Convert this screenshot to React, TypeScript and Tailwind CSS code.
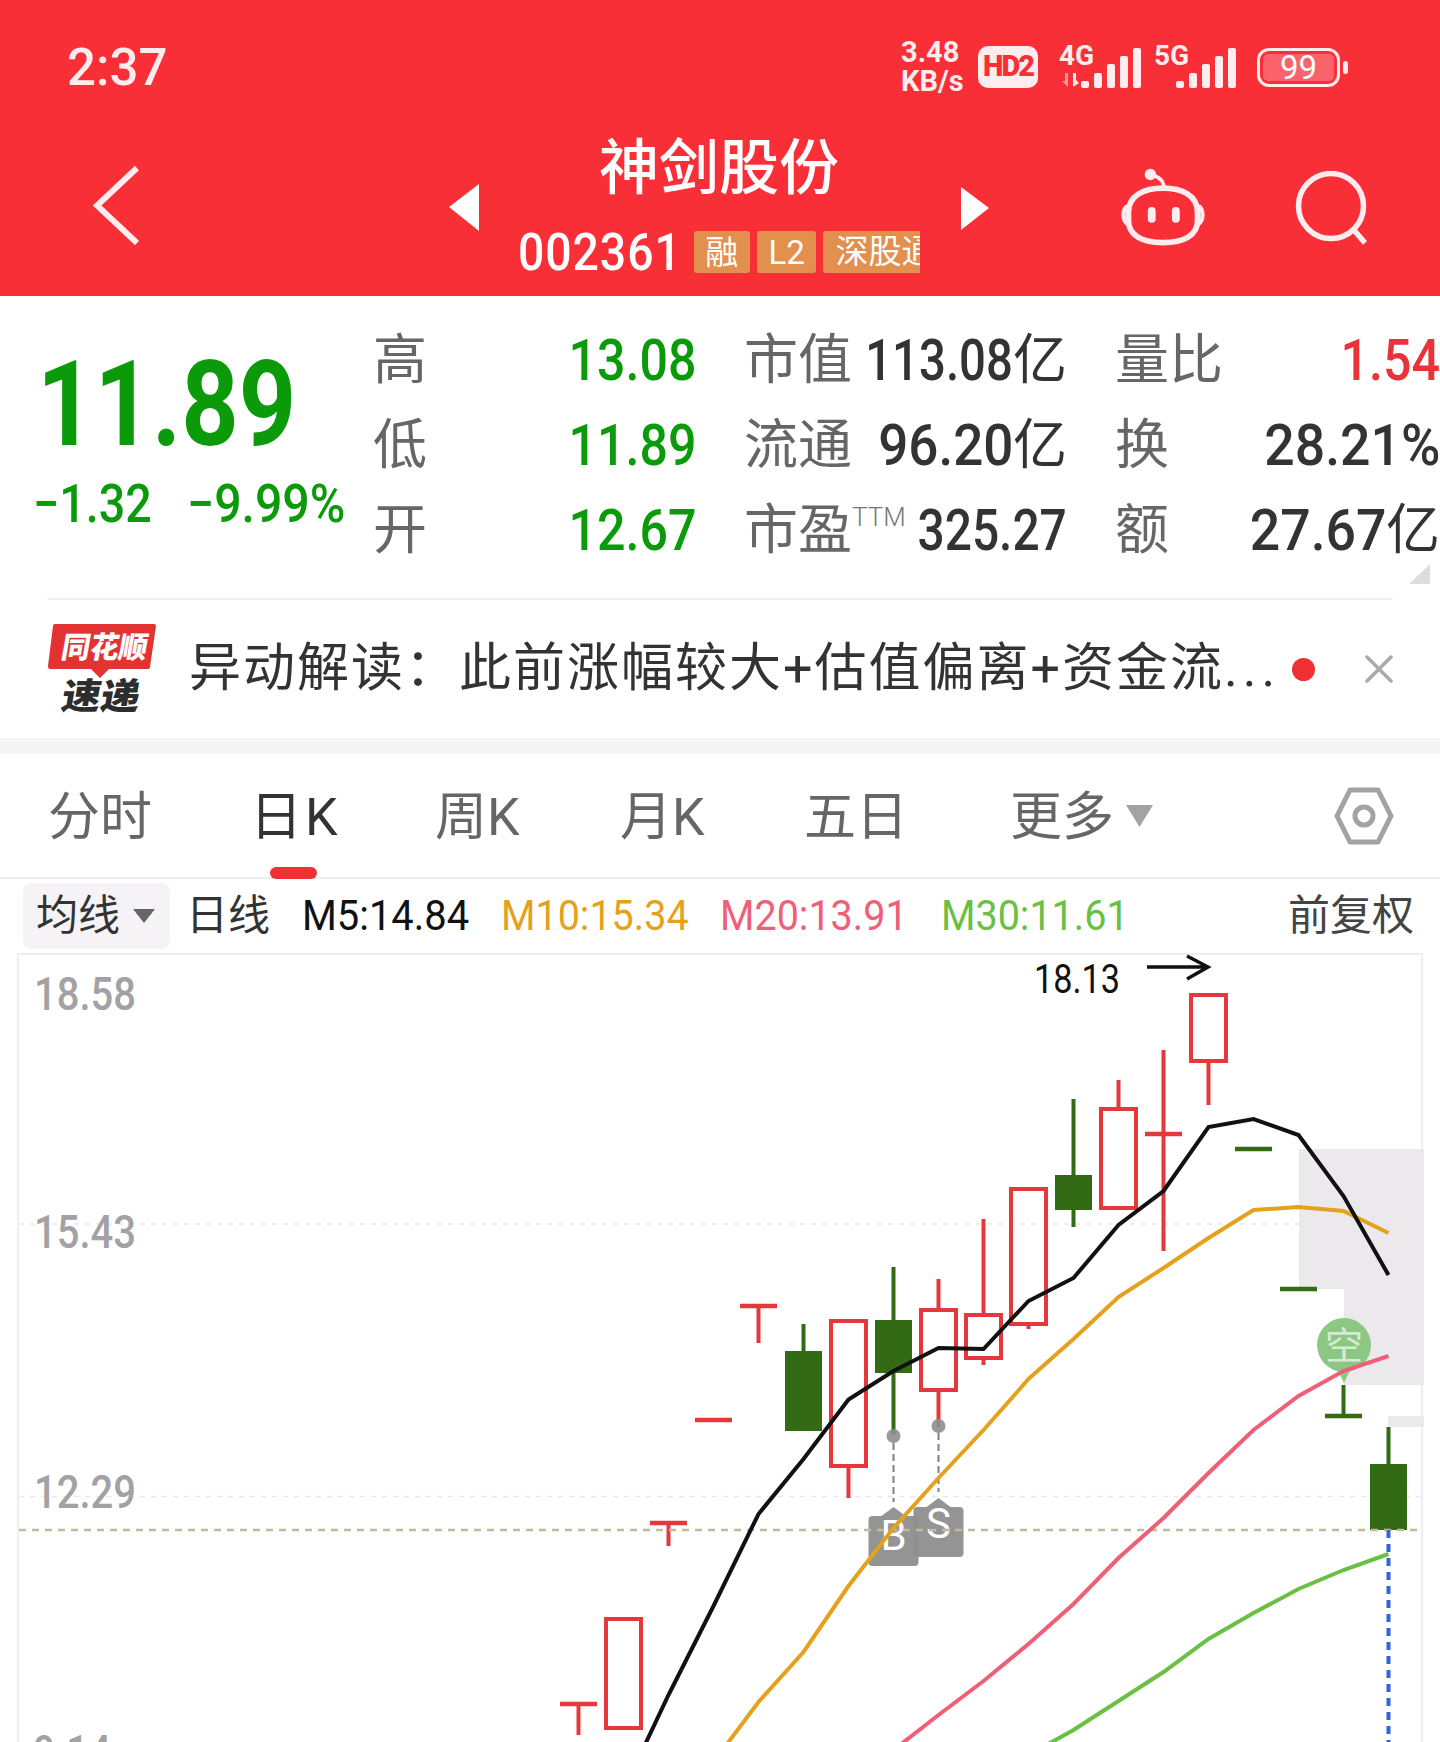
const RED = '#e5383c';
const GREEN = '#336a14';

// x of a candle, counted back from the newest one
const cx = (i: number) => 1388.5 - 45 * i;

type Candle = { i: number; top: number; bot: number; hollow?: boolean; wt?: number; wb?: number };

const candles: Candle[] = [
  { i: 0, top: 1464, bot: 1530, wt: 1427 },
  { i: 4, top: 993, bot: 1063, hollow: true, wb: 1105 },
  { i: 6, top: 1107, bot: 1210, hollow: true, wt: 1080 },
  { i: 7, top: 1175, bot: 1210, wt: 1099, wb: 1227 },
  { i: 8, top: 1187, bot: 1326, hollow: true, wb: 1329 },
  { i: 9, top: 1313, bot: 1360, hollow: true, wt: 1219, wb: 1365 },
  { i: 10, top: 1308, bot: 1392, hollow: true, wt: 1279, wb: 1427 },
  { i: 11, top: 1320, bot: 1373, wt: 1267, wb: 1435 },
  { i: 12, top: 1319, bot: 1468, hollow: true, wb: 1498 },
  { i: 13, top: 1351, bot: 1431, wt: 1324 },
  { i: 17, top: 1617, bot: 1730, hollow: true },
];

// flat days: bar plus optional stem
const flats = [
  { i: 1, y: 1416, from: 1385, to: 1416, color: GREEN },
  { i: 2, y: 1289, color: GREEN },
  { i: 3, y: 1149, color: GREEN },
  { i: 5, y: 1134, from: 1050, to: 1251, color: RED },
  { i: 14, y: 1306, from: 1305, to: 1343, color: RED },
  { i: 15, y: 1420, color: RED },
  { i: 16, y: 1523, from: 1522, to: 1546, color: RED },
  { i: 18, y: 1704, from: 1703, to: 1735, color: RED },
];

const ma5 = [1275, 1196, 1135, 1119, 1127, 1191, 1225, 1278, 1301, 1349, 1348, 1371, 1399.5, 1459, 1514, 1606, 1695, 1790];
const ma10 = [1233, 1211, 1207, 1210, 1238, 1268, 1297, 1339, 1379, 1430, 1478, 1528, 1586, 1652, 1702, 1762];
const ma20 = [1356, 1371, 1396, 1430, 1473, 1518, 1558, 1604, 1644, 1681, 1715, 1750];
const ma30 = [1554, 1570, 1589, 1613, 1639, 1672, 1701, 1730, 1755];

const toPoints = (ys: number[]) => ys.map((y, i) => `${cx(i)},${y}`).join(' ');

const Signal = ({ label, arrows }: { label: string; arrows?: boolean }) => (
  <div className="relative h-[42px] w-[84px]">
    <svg viewBox="0 0 84 42" className="absolute inset-0 h-full w-full overflow-visible" fill="#ffecee">
      <rect x="23" y="35" width="8" height="7" rx="2" />
      <rect x="36" y="27" width="8" height="15" rx="2" />
      <rect x="49" y="18" width="8" height="24" rx="2" />
      <rect x="62" y="10" width="8" height="32" rx="2" />
      <rect x="75" y="2" width="8" height="40" rx="2" />
      {arrows && (
        <g>
          <path d="M15 27h3v7l3 3-6 4z" />
          <path d="M7 27h3v14l-6-6h3z" opacity="0.55" />
        </g>
      )}
    </svg>
    <span className="absolute left-[1px] top-[-4px] text-[28px] font-bold leading-[28px] text-[#ffecee]">{label}</span>
  </div>
);

const Value = ({ children, unit, color, fit }: { children: string; unit?: string; color: string; fit: string }) => (
  <div className={`flex min-w-0 flex-1 items-center justify-end whitespace-nowrap ${color}`}>
    <span className={`inline-block origin-right text-[57px] font-medium leading-[85px] ${fit}`}>{children}</span>
    {unit && <span className="text-[54px] leading-[85px]">{unit}</span>}
  </div>
);

const Label = ({ children }: { children: string }) => (
  <span className="shrink-0 text-[54px] leading-[85px] text-[#666666]">{children}</span>
);

const Tag = ({ x, top, letter, ty }: { x: number; top: number; letter: string; ty: number }) => (
  <g>
    <path
      d={`M${x - 25} ${top + 19} a4 4 0 0 1 4 -4 h9 l12 -9 l12 9 h9 a4 4 0 0 1 4 4 v42 a4 4 0 0 1 -4 4 h-42 a4 4 0 0 1 -4 -4 z`}
      fill="#8e8e8e"
      opacity="0.95"
    />
    <text x={x} y={ty} textAnchor="middle" fontSize="42" fill="#ffffff">{letter}</text>
  </g>
);

const KChart = () => (
  <svg viewBox="0 953 1440 789" className="absolute inset-0 h-full w-full">
    <path d="M1299 1149H1424V1385H1344V1289H1299z" fill="#ece9ec" />
    <rect x="1388" y="1416" width="36" height="11" fill="#ece9ec" />
    <path d="M19 1224H1422M19 1496.5H1422" stroke="#e8e8e8" strokeWidth="1.5" strokeDasharray="5 6" />

    <text x="34" y="1010" fontSize="46" fontWeight="500" fill="#a2a2a5" textLength="102" lengthAdjust="spacingAndGlyphs">18.58</text>
    <text x="34" y="1248" fontSize="46" fontWeight="500" fill="#a2a2a5" textLength="102" lengthAdjust="spacingAndGlyphs">15.43</text>
    <text x="34" y="1508" fontSize="46" fontWeight="500" fill="#a2a2a5" textLength="102" lengthAdjust="spacingAndGlyphs">12.29</text>
    <text x="33" y="1768" fontSize="46" fontWeight="500" fill="#a2a2a5" textLength="78" lengthAdjust="spacingAndGlyphs">9.14</text>

    <text x="1034" y="993" fontSize="40" fill="#111111" textLength="86" lengthAdjust="spacingAndGlyphs">18.13</text>
    <path d="M1147 967H1208M1187 956L1208 967L1187 979" fill="none" stroke="#111111" strokeWidth="3.5" />

    {candles.map((c) => {
      const color = c.hollow ? RED : GREEN;
      const x = cx(c.i);
      return (
        <g key={c.i}>
          {c.wt && <line x1={x} x2={x} y1={c.wt} y2={c.top} stroke={color} strokeWidth="4" />}
          {c.wb && <line x1={x} x2={x} y1={c.bot} y2={c.wb} stroke={color} strokeWidth="4" />}
          {c.hollow ? (
            <rect x={x - 17.5} y={c.top + 2} width="35" height={c.bot - c.top - 4} fill="none" stroke={color} strokeWidth="4" />
          ) : (
            <rect x={x - 18.5} y={c.top} width="37" height={c.bot - c.top} fill={color} />
          )}
        </g>
      );
    })}
    {flats.map((f) => (
      <g key={f.i} stroke={f.color}>
        <line x1={cx(f.i) - 18.5} x2={cx(f.i) + 18.5} y1={f.y} y2={f.y} strokeWidth="4.5" />
        {f.from && <line x1={cx(f.i)} x2={cx(f.i)} y1={f.from} y2={f.to} strokeWidth="4" />}
      </g>
    ))}

    {/* buy / sell marks */}
    <circle cx="893.5" cy="1436" r="7" fill="#8e8e8e" opacity="0.9" />
    <circle cx="938.5" cy="1426" r="7" fill="#8e8e8e" opacity="0.9" />
    <path d="M893.5 1443V1502M938.5 1433V1492" stroke="#808080" strokeWidth="2" strokeDasharray="7 4" />
    <Tag x={893.5} top={1501} letter="B" ty={1550} />
    <Tag x={938.5} top={1492} letter="S" ty={1538} />
    <path d="M19 1530H1422" stroke="#c4b998" strokeWidth="2.5" strokeDasharray="7 6" />

    {/* short marker */}
    <circle cx="1344" cy="1345" r="27" fill="#8cc784" />
    <path d="M1336 1366L1344 1383L1352 1366z" fill="#8cc784" />
    <text x="1344" y="1359" textAnchor="middle" fontSize="38" fill="#d6ebd2">空</text>

    <path d="M1388.5 1530V1742" stroke="#2f63e0" strokeWidth="4" strokeDasharray="8 6" />

    <polyline points={toPoints(ma30)} fill="none" stroke="#69c043" strokeWidth="4" />
    <polyline points={toPoints(ma20)} fill="none" stroke="#ef5f78" strokeWidth="4" />
    <polyline points={toPoints(ma10)} fill="none" stroke="#e6a11c" strokeWidth="4" />
    <polyline points={toPoints(ma5)} fill="none" stroke="#111111" strokeWidth="4" />
  </svg>
);

export default function App() {
  return (
    <div className="h-[1742px] w-[1440px] overflow-hidden bg-white font-['Roboto','Noto_Sans_CJK_SC',sans-serif]">
      <header className="h-[296px] bg-[#f82f37] text-white">
        {/* status bar */}
        <div className="flex h-[134px] items-center text-[#ffecee]">
          <span className="ml-[67px] text-[51px] font-medium leading-none">2:37</span>
          <div className="ml-auto mr-[92px] flex items-center">
            <div className="w-[63px] text-[29px] font-bold leading-[29px]">
              <div>3.48</div>
              <div>KB/s</div>
            </div>
            <div className="ml-[14px] flex h-[42px] w-[60px] items-center justify-center rounded-[10px] bg-[#ffecee] text-[29px] font-black tracking-[-2px] text-[#f82f37]">
              HD2
            </div>
            <div className="ml-[20px]">
              <Signal label="4G" arrows />
            </div>
            <div className="ml-[11px]">
              <Signal label="5G" />
            </div>
            <div className="ml-[20px] flex h-[39px] w-[83px] items-center justify-center rounded-[12px] border-[3px] border-[#ffecee] p-[3px]">
              <div className="flex h-full w-full items-center justify-center rounded-[5px] bg-white/25 text-[33px] leading-none text-white">
                99
              </div>
            </div>
            <div className="ml-[3px] h-[13px] w-[5px] rounded-full bg-[#ffecee]" />
          </div>
        </div>

        {/* title bar */}
        <div className="flex h-[162px] items-start">
          <svg viewBox="0 0 46 80" className="ml-[93px] mt-[31px] h-[80px] w-[46px]" fill="none" stroke="#ffecee" strokeWidth="6">
            <path d="M44 3L4 40.5L44 78" />
          </svg>
          <svg viewBox="0 0 30 47" className="ml-[310px] mt-[50px] h-[47px] w-[30px]" fill="#ffffff">
            <path d="M30 0V47L0 23z" />
          </svg>
          <div className="ml-[39px] w-[402px]">
            <div className="mt-[5px] text-center text-[60px] font-medium leading-[60px]">神剑股份</div>
            <div className="mt-[32px] flex h-[42px] items-center">
              <span className="inline-block w-[154px] origin-left scale-x-[0.91] whitespace-nowrap text-[51px] font-medium leading-none tracking-[1px]">002361</span>
              <span className="ml-[22px] flex h-[42px] w-[56px] items-center justify-center rounded-[3px] bg-[#e38f4e] text-[33px] leading-none">融</span>
              <span className="ml-[7px] flex h-[42px] w-[60px] items-center justify-center rounded-[3px] bg-[#e38f4e] text-[33px] leading-none">L2</span>
              <span className="ml-[7px] h-[42px] w-[97px] overflow-hidden whitespace-nowrap rounded-l-[3px] bg-[#e38f4e] pl-[12px] text-[33px] leading-[42px]">深股通</span>
            </div>
          </div>
          <svg viewBox="0 0 28 43" className="ml-[41px] mt-[53px] h-[43px] w-[28px]" fill="#ffffff">
            <path d="M0 0V43L28 21z" />
          </svg>
          {/* robot */}
          <svg viewBox="0 0 84 74" className="ml-[130px] mt-[34px] h-[78px] w-[88px]" fill="none" stroke="#ffecee" strokeWidth="5.5">
            <circle cx="30" cy="6" r="5.5" fill="#ffecee" stroke="none" />
            <path d="M33 7C40 9 43 13 43 20" strokeWidth="3.5" />
            <path d="M9 42C9 26 24 19 42 19C60 19 75 26 75 42V50C75 64 62 71 42 71C22 71 9 64 9 50z" />
            <path d="M8 36C3 39 3 50 8 53M76 36C81 39 81 50 76 53" strokeWidth="4" />
            <rect x="27.5" y="37" width="7.5" height="15" rx="3.7" fill="#ffecee" stroke="none" />
            <rect x="50.5" y="37" width="7.5" height="15" rx="3.7" fill="#ffecee" stroke="none" />
          </svg>
          {/* search */}
          <svg viewBox="0 0 72 74" className="ml-[88px] mt-[37px] h-[74px] w-[72px]" fill="none" stroke="#ffecee" strokeWidth="5.5">
            <circle cx="36" cy="35" r="32.5" />
            <path d="M58 58L70 72" />
          </svg>
        </div>
      </header>

      {/* quote */}
      <section className="flex h-[302px]">
        <div className="w-[373px] shrink-0 pt-[67px] text-[#0a9a0a]">
          <div className="ml-[37px] origin-left scale-x-[0.85] text-[118px] font-bold leading-[84px]">11.89</div>
          <div className="ml-[33px] mt-[38px] flex h-[38px] whitespace-nowrap text-[53px] font-medium leading-[38px]">
            <span className="inline-block w-[154px] origin-left scale-x-[0.88]">−1.32</span>
            <span className="inline-block origin-left scale-x-[0.91]">−9.99%</span>
          </div>
        </div>
        <div className="mt-[22px] grid h-[255px] flex-1 grid-cols-[323px_323px_325px] gap-x-[48px]">
          <div className="flex"><Label>高</Label><Value color="text-[#0a9a0a]" fit="scale-x-[0.88]">13.08</Value></div>
          <div className="flex"><Label>市值</Label><Value color="text-[#333333]" unit="亿" fit="scale-x-[0.83]">113.08</Value></div>
          <div className="flex"><Label>量比</Label><Value color="text-[#e8333a]" fit="scale-x-[0.88]">1.54</Value></div>
          <div className="flex"><Label>低</Label><Value color="text-[#0a9a0a]" fit="scale-x-[0.88]">11.89</Value></div>
          <div className="flex"><Label>流通</Label><Value color="text-[#333333]" unit="亿" fit="scale-x-[0.93]">96.20</Value></div>
          <div className="flex"><Label>换</Label><Value color="text-[#333333]" fit="scale-x-[0.94]">28.21%</Value></div>
          <div className="flex"><Label>开</Label><Value color="text-[#0a9a0a]" fit="scale-x-[0.88]">12.67</Value></div>
          <div className="flex">
            <Label>市盈</Label>
            <span className="mt-[16px] shrink-0 text-[26px] font-light leading-[26px] text-[#777777]">TTM</span>
            <Value color="text-[#333333]" fit="scale-x-[0.84]">325.27</Value>
          </div>
          <div className="flex"><Label>额</Label><Value color="text-[#333333]" unit="亿" fit="scale-x-[0.94]">27.67</Value></div>
        </div>
      </section>

      <div className="relative mx-[47px] h-[2px] w-[1346px] bg-[#f0f0f0]">
        <div className="absolute bottom-[16px] right-[-37px] h-0 w-0 border-b-[20px] border-l-[21px] border-b-[#dddddd] border-l-transparent" />
      </div>

      {/* alert */}
      <div className="flex h-[138px] items-center">
        <svg viewBox="48 624 108 90" className="ml-[48px] h-[90px] w-[108px]">
          <path d="M55 624H154Q156 624 156 626L150 667Q150 669 147 669H109L100 678L91 669H50Q48 669 48 666L53 626Q53 624 55 624z" fill="#e33232" />
          <text x="60" y="658" fontSize="30" fontWeight="900" fill="#ffffff" transform="skewX(-10) translate(116 0)" textLength="86" lengthAdjust="spacingAndGlyphs">同花顺</text>
          <text x="60" y="709" fontSize="36" fontWeight="900" fill="#2d2d2d" transform="skewX(-10) translate(125 0)" textLength="78" lengthAdjust="spacingAndGlyphs">速递</text>
        </svg>
        <div className="ml-[33px] w-[1103px] whitespace-nowrap text-[52px] leading-none tracking-[2px] text-[#333333]">
          异动解读：此前涨幅较大+估值偏离+资金流<span className="tracking-[5px]">...</span>
        </div>
        <div className="h-[23px] w-[23px] rounded-full bg-[#ee3035]" />
        <svg viewBox="0 0 28 28" className="ml-[50px] h-[28px] w-[28px]" fill="none" stroke="#aaaaaa" strokeWidth="3.5" strokeLinecap="round">
          <path d="M2 2L26 26M26 2L2 26" />
        </svg>
      </div>

      <div className="h-[16px] bg-[#f5f5f5]" />

      {/* period tabs */}
      <div className="relative flex h-[125px] items-center border-b-2 border-[#eeeeee] pl-[48px] pt-[4px] text-[52px] leading-none text-[#666666]">
        <div className="w-[202px]">分时</div>
        <div className="relative flex h-full w-[185px] items-center tracking-[3px] text-[#333333]">
          日K
          <div className="absolute bottom-[-2px] left-[20px] h-[12px] w-[47px] rounded-full bg-[#ef3035]" />
        </div>
        <div className="w-[185px]">周K</div>
        <div className="w-[184px]">月K</div>
        <div className="w-[206px]">五日</div>
        <div>更多</div>
        <svg viewBox="0 0 27 22" className="-mt-[4px] ml-[12px] h-[22px] w-[27px]" fill="#a3a3a3">
          <path d="M0 0H27L13.5 22z" />
        </svg>
        <svg viewBox="0 0 60 58" className="-mt-[4px] ml-[181px] h-[58px] w-[60px]" fill="none" stroke="#a3a3a3" strokeWidth="5" strokeLinejoin="round">
          <path d="M16 3H44L57 29L44 55H16L3 29z" />
          <circle cx="30" cy="29" r="9" />
        </svg>
      </div>

      {/* moving average legend */}
      <div className="flex h-[74px] items-center whitespace-nowrap text-[42px] leading-none">
        <div className="ml-[23px] flex h-[66px] w-[147px] items-center rounded-[8px] bg-[#f6f3f6] pl-[13px] text-[#333333]">
          均线
          <svg viewBox="0 0 22 14" className="ml-[13px] h-[14px] w-[22px]" fill="#666666">
            <path d="M0 0H22L11 14z" />
          </svg>
        </div>
        <div className="ml-[16px] w-[116px] text-[#333333]">日线</div>
        <div className="w-[199px] origin-left scale-x-[0.95] text-[#111111]">M5:14.84</div>
        <div className="w-[219px] origin-left scale-x-[0.94] text-[#e6a11c]">M10:15.34</div>
        <div className="w-[221px] origin-left scale-x-[0.94] text-[#ef5f78]">M20:13.91</div>
        <div className="origin-left scale-x-[0.94] text-[#69c043]">M30:11.61</div>
        <div className="ml-auto mr-[26px] text-[#444444]">前复权</div>
      </div>

      {/* candlestick chart */}
      <div className="relative h-[789px]">
        <div className="ml-[17px] h-[800px] w-[1406px] border-2 border-[#eeeeee]" />
        <KChart />
      </div>
    </div>
  );
}
